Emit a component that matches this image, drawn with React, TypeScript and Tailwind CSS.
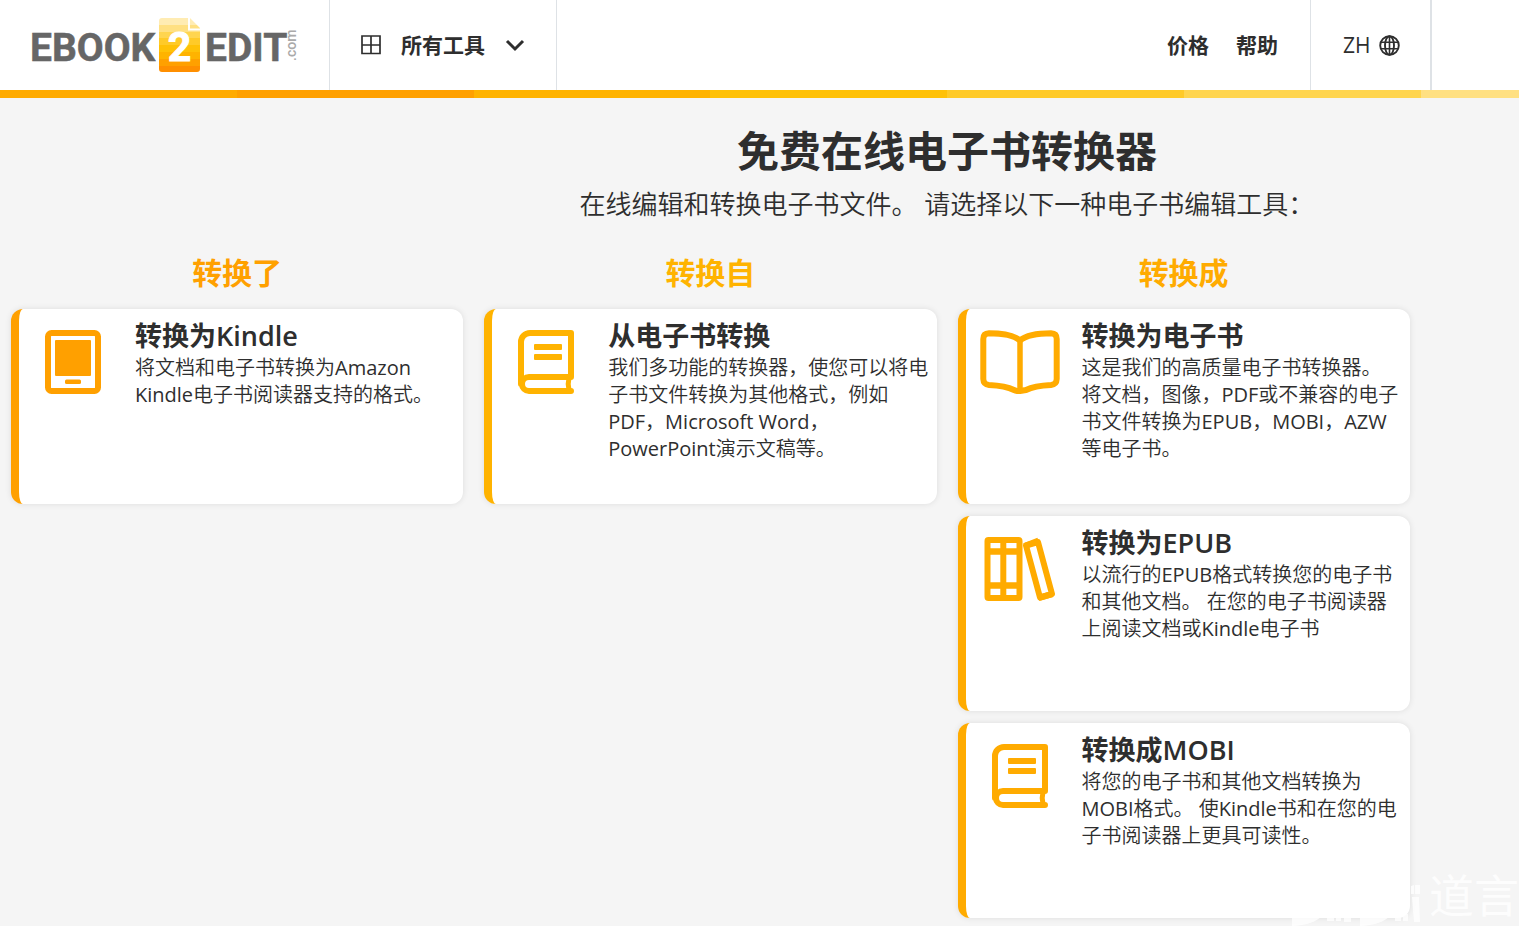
import type { ReactNode } from "react";

type Tool = { title: string; text: string; icon: ReactNode };
type Group = {
  name: string;
  textColor: string;
  borderColor: string;
  tools: Tool[];
};

function TabletIcon() {
  return (
    <svg className="h-16 w-14" viewBox="0 0 56 64" fill="none" aria-hidden="true">
      <rect x="3" y="3" width="50" height="58" rx="3.5" stroke="currentColor" strokeWidth="6" />
      <rect x="10" y="10" width="36" height="36" rx="1" fill="currentColor" />
      <rect x="20" y="49.5" width="16" height="4.5" rx="1.5" fill="currentColor" />
    </svg>
  );
}

function BookIcon() {
  return (
    <svg className="h-16 w-14" viewBox="0 0 56 64" fill="none" aria-hidden="true">
      <path
        d="M3 54V12a9 9 0 0 1 9-9h41v44H11a7 7 0 0 0 0 14h42"
        stroke="currentColor"
        strokeWidth="6"
        strokeLinejoin="round"
        strokeLinecap="round"
      />
      <path d="M51 48q-1.600 6 0 12" stroke="currentColor" strokeWidth="5" />
      <path d="M17 14h26a1 1 0 0 1 1 1v4a1 1 0 0 1-1 1H17a1 1 0 0 1-1-1v-4a1 1 0 0 1 1-1zM17 24h26a1 1 0 0 1 1 1v4a1 1 0 0 1-1 1H17a1 1 0 0 1-1-1v-4a1 1 0 0 1 1-1z" fill="currentColor" />
    </svg>
  );
}

function OpenBookIcon() {
  return (
    <svg className="h-16 w-20" viewBox="0 0 80 64" fill="none" aria-hidden="true">
      <path
        d="M40 10.500C34 5.500 21 3.300 9 3.300Q3.300 3.500 3.300 9V49Q3.500 54.500 9 55C19 55.500 27 56.500 34 60Q37 61.500 40 61T46 60C53 56.500 61 55.500 71 55Q76.500 54.500 76.700 49V9Q76.700 3.500 71 3.300C59 3.300 46 5.500 40 10.500Z"
        stroke="currentColor"
        strokeWidth="6"
        strokeLinejoin="round"
      />
      <path d="M40 10V61" stroke="currentColor" strokeWidth="5.500" />
      <path d="M32 57.500q8 3 16 0v3.500q-8 4.500-16 0z" fill="currentColor" />
    </svg>
  );
}

function BooksIcon() {
  return (
    <svg className="h-16 w-[72px]" viewBox="0 0 72 64" fill="none" aria-hidden="true">
      <g stroke="currentColor" strokeWidth="6" strokeLinejoin="round">
        <rect x="3.500" y="3" width="32" height="58" rx="1" />
        <path d="M19.300 3V61" />
        <path d="M3.500 14.500H35.500M3.500 48.500H35.500" strokeWidth="6.500" />
        <path d="M42 8.500L54 5L68 57L56 60.500z" />
        <path d="M40.500 9L54.500 3.500M54.500 61L68.500 57" />
      </g>
    </svg>
  );
}

function Logo() {
  return (
    <svg className="h-[60px] w-[270px]" viewBox="0 0 270 60" role="img" aria-label="EBOOK2EDIT.com">
      <defs>
        <clipPath id="page-shape">
          <path d="M3 3H32L42 13V54a3 3 0 0 1-3 3H4a3 3 0 0 1-3-3V6a3 3 0 0 1 3-3z" />
        </clipPath>
      </defs>
      <g transform="translate(130 0)" clipPath="url(#page-shape)">
        <rect y="3" width="42" height="7" fill="#ffecb3" />
        <rect y="10" width="42" height="7" fill="#ffe082" />
        <rect y="17" width="42" height="6" fill="#ffd54f" />
        <rect y="23" width="42" height="7" fill="#ffca28" />
        <rect y="30" width="42" height="7" fill="#ffc107" />
        <rect y="37" width="42" height="7" fill="#ffb300" />
        <rect y="44" width="42" height="7" fill="#ffa000" />
        <rect y="51" width="42" height="6" fill="#ff8f00" />
        <path d="M31 3V14.500H42" fill="none" stroke="#fff" strokeWidth="2" />
      </g>
      <g fontFamily="Roboto, sans-serif" fontWeight="700">
        <text x="2" y="46" fontSize="39" fill="#666" stroke="#666" strokeWidth="0.500">EBOOK</text>
        <text x="151.500" y="46" fontSize="41" fill="#fff" stroke="#fff" textAnchor="middle">2</text>
        <text x="177" y="46" fontSize="39" fill="#666" stroke="#666" strokeWidth="0.500">EDIT</text>
      </g>
      <text
        transform="translate(268 46) rotate(-90)"
        fontSize="14"
        fill="#aaa"
        fontFamily="Roboto, sans-serif"
        fontWeight="500"
      >
        .com
      </text>
    </svg>
  );
}

function Watermark() {
  return (
    <div className="pointer-events-none absolute right-0 bottom-0 flex h-14 items-end text-white opacity-80" aria-hidden="true">
      <svg className="h-14 w-[140px]" viewBox="0 0 140 56" fill="currentColor">
        <path d="M3 46H33Q24 55 3 56z" />
        <path d="M38 44h7v7h-7zM47 44h5v7h-5zM55 44h7v8h-7z" />
        <path d="M71 46H101Q92 55 71 56z" />
        <path d="M106 44h6v7h-6zM114 44h5v7h-5z" />
        <path d="M122 16l3-1v9h-3zM126 15h5v9h-5zM123 27h7l1 25h-6z" />
      </svg>
      <span className="text-[45px] leading-[60px] whitespace-nowrap">道言</span>
    </div>
  );
}

const groups: Group[] = [
  {
    name: "转换了",
    textColor: "text-[#ffa000]",
    borderColor: "border-[#ffa000]",
    tools: [
      {
        title: "转换为Kindle",
        text: "将文档和电子书转换为Amazon Kindle电子书阅读器支持的格式。",
        icon: <TabletIcon />,
      },
    ],
  },
  {
    name: "转换自",
    textColor: "text-[#ffb300]",
    borderColor: "border-[#ffb300]",
    tools: [
      {
        title: "从电子书转换",
        text: "我们多功能的转换器，使您可以将电子书文件转换为其他格式，例如PDF，Microsoft Word，PowerPoint演示文稿等。",
        icon: <BookIcon />,
      },
    ],
  },
  {
    name: "转换成",
    textColor: "text-[#ffab00]",
    borderColor: "border-[#ffab00]",
    tools: [
      {
        title: "转换为电子书",
        text: "这是我们的高质量电子书转换器。 将文档，图像，PDF或不兼容的电子书文件转换为EPUB，MOBI，AZW等电子书。",
        icon: <OpenBookIcon />,
      },
      {
        title: "转换为EPUB",
        text: "以流行的EPUB格式转换您的电子书和其他文档。 在您的电子书阅读器上阅读文档或Kindle电子书",
        icon: <BooksIcon />,
      },
      {
        title: "转换成MOBI",
        text: "将您的电子书和其他文档转换为MOBI格式。 使Kindle书和在您的电子书阅读器上更具可读性。",
        icon: <BookIcon />,
      },
    ],
  },
];

const stripes = [
  "bg-[#ffab00]",
  "bg-[#ffa000]",
  "bg-[#ffb300]",
  "bg-[#ffc107]",
  "bg-[#ffca28]",
  "bg-[#ffd54f]",
  "bg-[#ffe082]",
  "bg-[#ffecb3]",
];

function ToolCard({ tool, group }: { tool: Tool; group: Group }) {
  return (
    <a
      href="#"
      className={`flex min-h-[195px] rounded-xl border-l-8 bg-white pt-[9px] pr-[7px] shadow-[0_0_6px_rgba(0,0,0,0.1)] ${group.borderColor}`}
    >
      <span className={`flex w-[108px] shrink-0 justify-center pt-3 ${group.textColor}`}>{tool.icon}</span>
      <span className="block min-w-0 flex-1 pl-2">
        <span className="block text-[27px] leading-9 font-semibold">{tool.title}</span>
        <span className="block font-['Open_Sans','Noto_Sans_CJK_SC_DemiLight','Noto_Sans_CJK_SC',sans-serif] text-[20px] leading-[27px] font-normal">
          {tool.text}
        </span>
      </span>
    </a>
  );
}

export default function App() {
  return (
    <div className="relative min-h-screen overflow-hidden bg-[#f5f5f5] font-['Open_Sans','Noto_Sans_CJK_SC',sans-serif] text-[#2e2e2e]">
      <div className="min-w-[1894px]">
        <header>
          <div className="flex h-[90px] bg-white text-[21px]">
            <a href="#" className="flex w-[330px] items-center border-r border-[#dee2e6] pl-7">
              <Logo />
            </a>
            <button type="button" className="flex w-[227px] items-center border-r border-[#dee2e6] pl-[31px] font-bold">
              <svg className="h-5 w-5" viewBox="0 0 20 20" fill="none" stroke="currentColor" strokeWidth="1.700" aria-hidden="true">
                <path d="M1 1H19V18.500H1zM10 1V18.500M1 10H19" />
              </svg>
              <span className="ml-5 pt-0.5">所有工具</span>
              <svg className="ml-5 h-5 w-5" viewBox="0 0 20 20" fill="none" stroke="currentColor" strokeWidth="3" aria-hidden="true">
                <path d="M2 6L10 14L18 6" />
              </svg>
            </button>
            <nav className="ml-auto flex items-center gap-[27px] border-r border-[#dee2e6] pt-0.5 pr-8 font-bold">
              <a href="#">价格</a>
              <a href="#">帮助</a>
            </nav>
            <button type="button" className="flex w-[121px] items-center gap-2 border-r-2 border-[#dee2e6] pl-8 font-medium">
              <span className="pt-0.5">ZH</span>
              <svg className="h-[21px] w-[21px]" viewBox="0 0 21 21" fill="none" stroke="currentColor" strokeWidth="1.900" aria-hidden="true">
                <circle cx="10.500" cy="10.500" r="9.300" />
                <ellipse cx="10.500" cy="10.500" rx="4.500" ry="9.300" />
                <path d="M10.500 1V20M2 7.300H19M2 13.700H19" strokeWidth="1.600" />
              </svg>
            </button>
            <div className="w-[462px]" />
          </div>
          <div className="grid h-2 grid-cols-8">
            {stripes.map((color) => (
              <div key={color} className={color} />
            ))}
          </div>
        </header>

        <main className="pt-[23px] pb-2">
          <h1 className="text-center text-[42px] leading-[60px] font-bold">免费在线电子书转换器</h1>
          <p className="text-center text-[26px] leading-[46px] font-[350]">
            在线编辑和转换电子书文件。 请选择以下一种电子书编辑工具：
          </p>
          <div className="mt-6 grid grid-cols-4 gap-[21px] px-[11px]">
            {groups.map((group) => (
              <section key={group.name} className="flex flex-col">
                <h2 className={`mb-[14px] text-center text-[30px] leading-[44px] font-bold ${group.textColor}`}>{group.name}</h2>
                <div className="flex flex-col gap-3">
                  {group.tools.map((tool) => (
                    <ToolCard key={tool.text} tool={tool} group={group} />
                  ))}
                </div>
              </section>
            ))}
          </div>
        </main>
      </div>
      <Watermark />
    </div>
  );
}
